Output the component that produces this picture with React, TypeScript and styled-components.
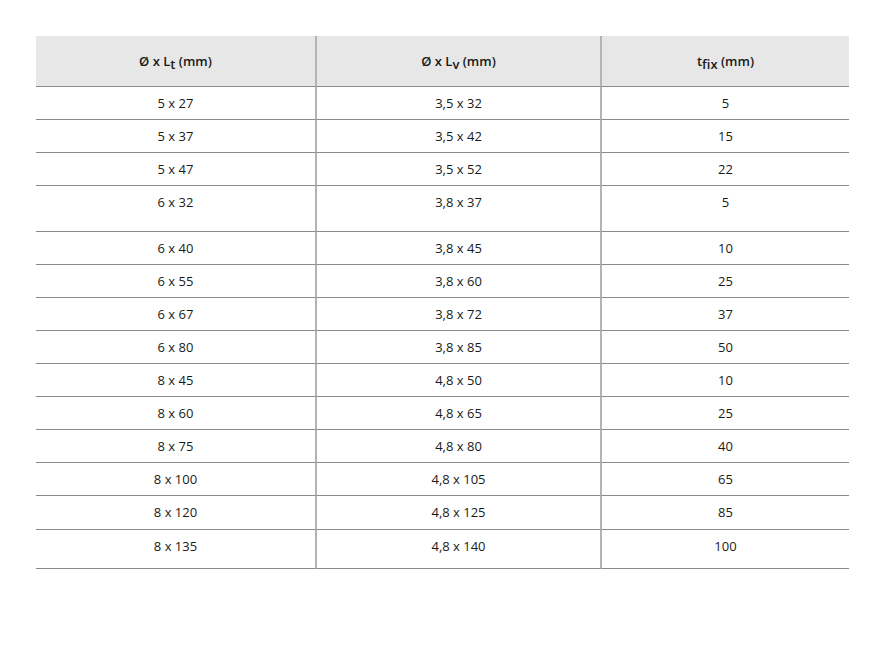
import React from "react";
import styled, { createGlobalStyle } from "styled-components";

const Global = createGlobalStyle`
  html, body { margin: 0; padding: 0; background: #ffffff; }
  body { font-family: "Open Sans", "Liberation Sans", sans-serif; color: #1a1a1a; }
`;

const Page = styled.div`
  padding: 36px 0 0 36px;
`;

const Table = styled.table`
  border-collapse: separate;
  border-spacing: 0;
  width: 813px;
  table-layout: fixed;
  font-size: 13px;
`;

const HeadCell = styled.th`
  background: #e6e7e6;
  padding: 0;
  line-height: 50px;
  font-weight: 600;
  text-align: center;
  vertical-align: middle;
  border-bottom: 1px solid #8a8a8a;
  &:not(:first-child) { border-left: 2px solid #b4b4b4; }
`;

const Cell = styled.td<{ $extra: number }>`
  padding: 0 0 ${(p) => p.$extra}px;
  line-height: 32px;
  text-align: center;
  vertical-align: top;
  border-bottom: 1px solid #8a8a8a;
  &:not(:first-child) { border-left: 2px solid #b4b4b4; }
`;

const Sub = styled.span`
  position: relative;
  top: 3px;
  font-size: 13px;
  line-height: 0;
`;

const rows: [string, string, string, number][] = [
  ["5 x 27", "3,5 x 32", "5", 33],
  ["5 x 37", "3,5 x 42", "15", 33],
  ["5 x 47", "3,5 x 52", "22", 33],
  ["6 x 32", "3,8 x 37", "5", 46],
  ["6 x 40", "3,8 x 45", "10", 33],
  ["6 x 55", "3,8 x 60", "25", 33],
  ["6 x 67", "3,8 x 72", "37", 33],
  ["6 x 80", "3,8 x 85", "50", 33],
  ["8 x 45", "4,8 x 50", "10", 33],
  ["8 x 60", "4,8 x 65", "25", 33],
  ["8 x 75", "4,8 x 80", "40", 33],
  ["8 x 100", "4,8 x 105", "65", 33],
  ["8 x 120", "4,8 x 125", "85", 34],
  ["8 x 135", "4,8 x 140", "100", 39],
];

export default function App() {
  return (
    <>
      <Global />
      <Page>
        <Table>
          <colgroup>
            <col style={{ width: 279 }} />
            <col style={{ width: 285 }} />
            <col style={{ width: 249 }} />
          </colgroup>
          <thead>
            <tr>
              <HeadCell>
                Ø x L<Sub>t</Sub> (mm)
              </HeadCell>
              <HeadCell>
                Ø x L<Sub>v</Sub> (mm)
              </HeadCell>
              <HeadCell>
                t<Sub>fix</Sub> (mm)
              </HeadCell>
            </tr>
          </thead>
          <tbody>
            {rows.map(([a, b, c, h]) => (
              <tr key={a}>
                <Cell $extra={h - 33}>{a}</Cell>
                <Cell $extra={h - 33}>{b}</Cell>
                <Cell $extra={h - 33}>{c}</Cell>
              </tr>
            ))}
          </tbody>
        </Table>
      </Page>
    </>
  );
}
